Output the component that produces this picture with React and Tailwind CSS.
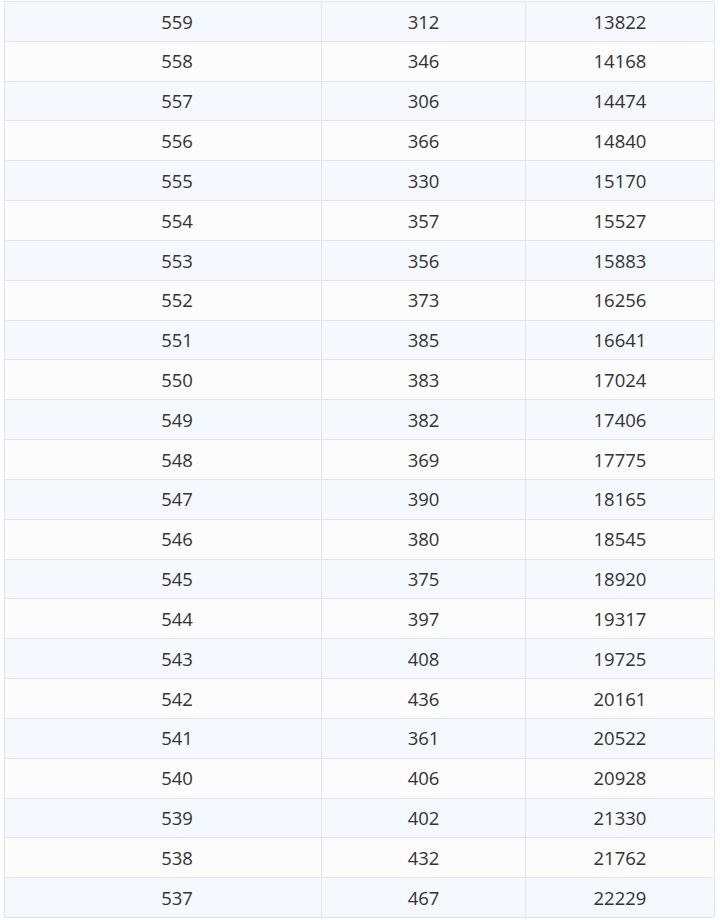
import React from 'react'

const rows = [
  [559, 312, 13822],
  [558, 346, 14168],
  [557, 306, 14474],
  [556, 366, 14840],
  [555, 330, 15170],
  [554, 357, 15527],
  [553, 356, 15883],
  [552, 373, 16256],
  [551, 385, 16641],
  [550, 383, 17024],
  [549, 382, 17406],
  [548, 369, 17775],
  [547, 390, 18165],
  [546, 380, 18545],
  [545, 375, 18920],
  [544, 397, 19317],
  [543, 408, 19725],
  [542, 436, 20161],
  [541, 361, 20522],
  [540, 406, 20928],
  [539, 402, 21330],
  [538, 432, 21762],
  [537, 467, 22229],
]

const App = () => {
  return (
    <div className="min-h-[920px] bg-white pt-px pl-1 font-['Open_Sans','Noto_Sans',sans-serif] text-[18.5px] text-[#333]">
      <div className="w-[710px] border-t border-l border-[#e1e4ea]">
        {rows.map((r, i) => (
          <div
            key={r[0]}
            className={`grid h-[39.83px] grid-cols-[317px_204px_189px] border-b border-[#e1e4ea] ${
              i % 2 === 0 ? 'bg-[#f5f9fe]' : 'bg-[#fcfcfc]'
            }`}
          >
            {/* first column sits a little right of centre */}
            <div className="flex items-center justify-center border-r border-[#e1e4ea] pl-7">{r[0]}</div>
            <div className="flex items-center justify-center border-r border-[#e1e4ea]">{r[1]}</div>
            <div className="flex items-center justify-center border-r border-[#e1e4ea]">{r[2]}</div>
          </div>
        ))}
      </div>
    </div>
  )
}

export default App
